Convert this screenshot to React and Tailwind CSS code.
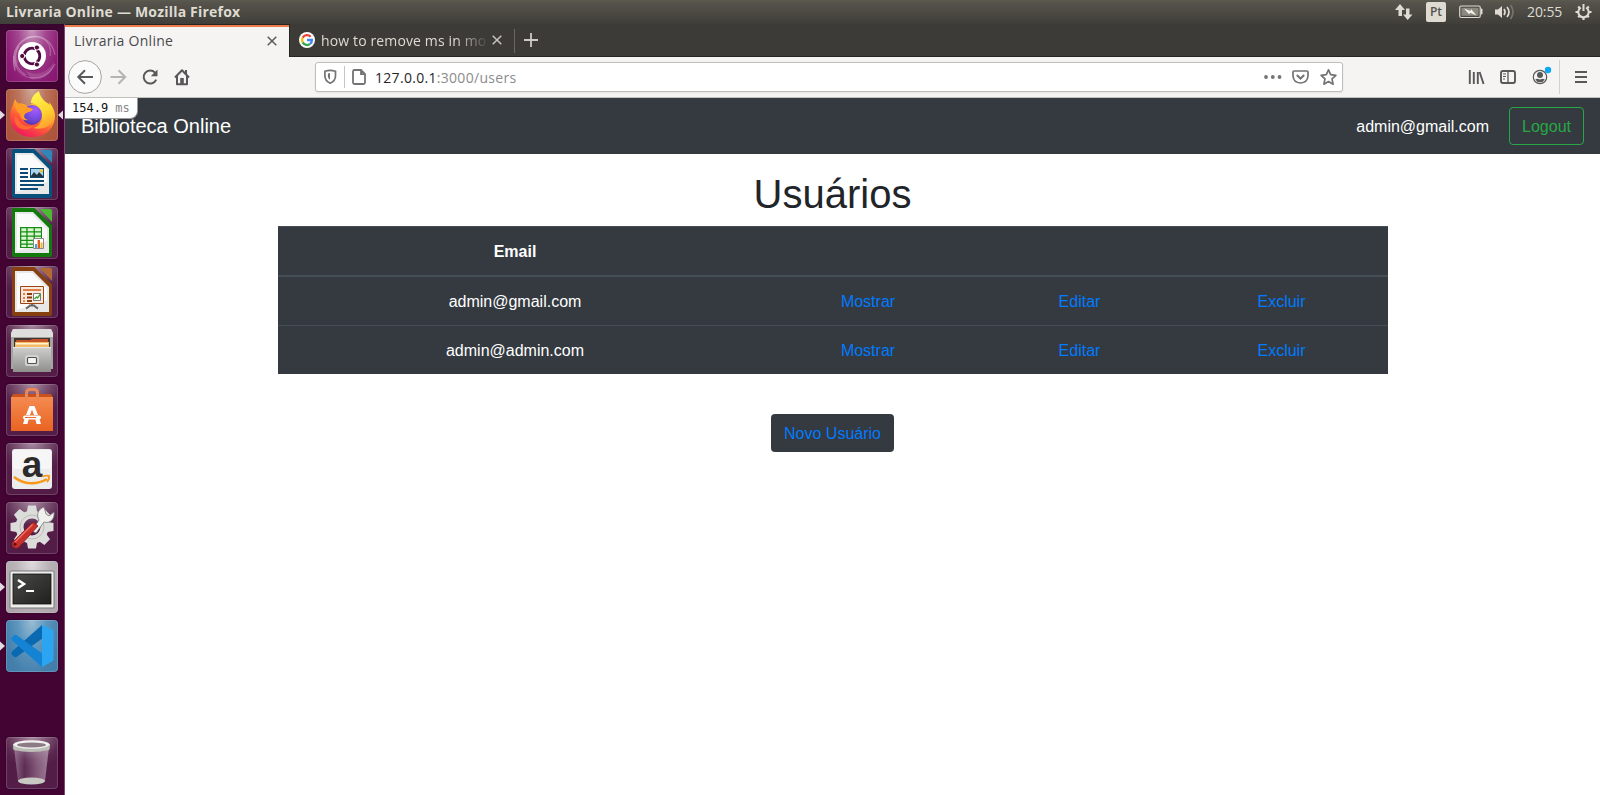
import React from "react";

function Tile({ tone, children, left, right }) {
  return (
    <div className="relative flex h-[52px] w-full shrink-0 pl-[6px]">
      {left && (
        <svg className="absolute left-0 top-[21px]" width="5" height="10" viewBox="0 0 5 10">
          <path d="M0 0.5 5 5 0 9.5z" fill="#e0dcdf" />
        </svg>
      )}
      <div className={"h-[52px] w-[52px] overflow-hidden rounded-[4px] shadow-[inset_0_0_0_1px_rgba(255,255,255,0.16),0_0_2px_rgba(0,0,0,0.45)] " + tone}>
        <svg width="52" height="52" viewBox="0 0 52 52">{children}</svg>
      </div>
      {right && (
        <svg className="absolute right-[1px] top-[21px]" width="5" height="10" viewBox="0 0 5 10">
          <path d="M5 0.5 0 5 5 9.5z" fill="#e0dcdf" />
        </svg>
      )}
    </div>
  );
}

const glass = "bg-[radial-gradient(ellipse_38px_30px_at_50%_0%,#a98aa2_0%,#7d5473_40%,#5b2850_75%,#531d48_100%)]";

function Dash() {
  return (
    <Tile tone="bg-[radial-gradient(ellipse_at_50%_0%,#c795bd_0%,#a4468f_38%,#8d1d76_75%,#87156e_100%)]">
      <g fill="none" stroke="#fff" strokeOpacity=".25" strokeWidth="1.2">
        <path d="M9 41C3 20 16 5 31 7c9 1 15 8 13 19" />
        <path d="M20 8C35 2 47 12 49 25" />
        <path d="M8 26c0 15 11 25 26 21 8-2 12-7 15-13" />
        <path d="M13 16C5 28 11 40 20 45" />
      </g>
      <path d="M9 41C2 18 17 4 31 7 17 8 8 19 12 32z" fill="#fff" opacity=".14" />
      <path d="M19 40c10 8 24 2 29-9 0 12-10 20-23 18z" fill="#fff" opacity=".14" />
      <circle cx="26" cy="27" r="14" fill="#4d073d" opacity=".35" />
      <circle cx="26" cy="26" r="14" fill="#fff" />
      <circle cx="26" cy="26" r="7.8" fill="none" stroke="#510b42" strokeWidth="2.800" strokeDasharray="14.5 1.840" strokeDashoffset="-9.100" />
      <g fill="#510b42" stroke="#fff" strokeWidth="1">
        <circle cx="16.2" cy="26" r="2.6" />
        <circle cx="30.9" cy="17.5" r="2.6" />
        <circle cx="30.9" cy="34.5" r="2.6" />
      </g>
    </Tile>
  );
}

function Firefox() {
  return (
    <Tile left right tone="bg-[radial-gradient(ellipse_at_50%_0%,#d0a899_0%,#bb745b_38%,#ae583e_75%,#aa5239_100%)]">
      <defs>
        <linearGradient id="fxBody" x1=".85" y1="0" x2=".25" y2="1">
          <stop offset="0" stopColor="#ffe62e" />
          <stop offset=".35" stopColor="#ffac2a" />
          <stop offset=".62" stopColor="#ff5b36" />
          <stop offset="1" stopColor="#ee1261" />
        </linearGradient>
        <radialGradient id="fxGlobe" cx=".65" cy=".25" r=".85">
          <stop offset="0" stopColor="#a65bff" />
          <stop offset=".6" stopColor="#7048d8" />
          <stop offset="1" stopColor="#4c3299" />
        </radialGradient>
        <linearGradient id="fxFlame" x1=".4" y1="0" x2=".7" y2="1">
          <stop offset="0" stopColor="#fff44f" />
          <stop offset=".55" stopColor="#ffd52f" />
          <stop offset="1" stopColor="#ff9830" />
        </linearGradient>
      </defs>
      <path d="M9 10c1 2 2 4 4 5 3-1 6 0 8 2l12-5c7 0 15 4 16 14 0 13-9 22-23 22C13 48 4 39 4 28c0-7 3-11 5-18z" fill="url(#fxBody)" />
      <path d="M33 2c-5 3-8 7-8 12 7 1 11 6 11 14 0 6-4 10-9 11 12 3 21-3 21-14 0-5-2-9-5-12l1 4C39 12 34 9 33 2z" fill="url(#fxFlame)" />
      <circle cx="26" cy="26" r="10" fill="url(#fxGlobe)" />
      <path d="M9 13c2 1 8 2 12 5 2 1 5 1 6 2-1 3-6 3-8 5-2 3 0 5 3 6-5 1-8-2-8-6-3-2-5-5-5-12z" fill="#ff9b27" />
      <path d="M12 30c3 7 10 9 16 6-3 5-11 6-16 2-3-3-4-7-3-11z" fill="#ff6a32" />
    </Tile>
  );
}

function Doc({ dark, corner, children }) {
  return (
    <Tile tone={glass}>
      <path d="M8 1h20.500L46 18.500V48q0 2-2 2H8q-2 0-2-2V3q0-2 2-2z" fill={dark} />
      <path d="M34 2h10q2 0 2 2v11z" fill={corner} />
      <path d="M9 5h18l16 16v25H9z" fill="#e8e8e8" />
      <path d="M11 7h15l15 15v12L11 44z" fill="#fff" opacity=".8" />
      {children}
    </Tile>
  );
}

function Writer() {
  return (
    <Doc dark="#07517c" corner="#2e86bb">
      <g fill="#0c4a73">
        <path d="M14 20h8v2h-8zM14 24h8v2h-8zM14 28h8v2h-8zM14 32h24v2H14zM14 36h24v2H14zM14 40h18v2H14z" />
        <path d="M24 20h14v10H24z" />
      </g>
      <path d="M25 21h12v8H25z" fill="#a9d4ec" />
      <path d="M25 28l3-4 3 3 2-3 4 4v1H25z" fill="#22343b" />
      <circle cx="35.5" cy="22.8" r="1.8" fill="#f4c534" />
    </Doc>
  );
}

function Calc() {
  return (
    <Doc dark="#127a0b" corner="#4dba34">
      <path d="M14 20h22v21H14z" fill="#178c13" />
      <g fill="#d9f7d0">
        <path d="M15.3 21.3h5v3h-5zM21.6 21.3h6v3h-6zM28.9 21.3h6v3h-6z" />
        <path d="M15.3 25.5h5v3h-5zM21.6 25.5h6v3h-6zM28.9 25.5h6v3h-6z" />
        <path d="M15.3 29.7h5v3h-5zM21.6 29.7h6v3h-6zM28.9 29.7h6v3h-6z" />
        <path d="M15.3 33.9h5v2.6h-5zM21.6 33.9h6v2.6h-6zM15.3 37.7h5v2.4h-5zM21.6 37.7h6v2.4h-6z" />
      </g>
      <path d="M27.5 31.5h10v10h-10z" fill="#fff" stroke="#888" />
      <path d="M29 37h2v4h-2z" fill="#3ea5d8" />
      <path d="M31.6 33h2.4v8h-2.4z" fill="#e35a25" />
      <path d="M34.6 35.5h2v5.5h-2z" fill="#efb82c" />
    </Doc>
  );
}

function Impress() {
  return (
    <Doc dark="#87400f" corner="#b56a35">
      <path d="M14.5 20.5h23v17h-23z" fill="#f9e8dc" stroke="#9c4514" />
      <path d="M17 23h18v2H17z" fill="#e07f4a" />
      <path d="M17 27h2v2h-2zM17 31h2v2h-2zM17 34.3h2V36h-2z" fill="#e07f4a" />
      <path d="M21 27h5v2h-5zM21 30.6h5v2h-5zM21 34h5v2h-5z" fill="#8b3e12" />
      <path d="M27.5 27.5h7v7h-7z" fill="#fff" stroke="#777" />
      <path d="M28.5 33l2-2 1 1 3-4" fill="none" stroke="#3aa331" strokeWidth="1.3" />
      <path d="M26 38v2M20 42.5c2-1 3-2 4-3h4c1 1 2 2 4 3" fill="none" stroke="#666" strokeWidth="2" />
    </Doc>
  );
}

function Files() {
  return (
    <Tile tone={glass}>
      <defs>
        <linearGradient id="cab" x1="0" y1="0" x2="0" y2="1">
          <stop offset="0" stopColor="#cfcfcd" />
          <stop offset="1" stopColor="#8e8e8c" />
        </linearGradient>
      </defs>
      <path d="M7 4h38l2 5v35H5V9z" fill="#a4a4a2" />
      <path d="M7 4h38l2 4v4H5V8z" fill="#dededc" />
      <path d="M8 13h36v9H8z" fill="#403630" />
      <path d="M10 15h14l2-1h16v3H10z" fill="#c45228" />
      <path d="M9 17h34v5H9z" fill="#f4bb69" />
      <path d="M10 18h32v1.5H10z" fill="#fff2cd" />
      <path d="M7 22h38v25H7z" fill="url(#cab)" />
      <path d="M7 22.5h38" stroke="#e8e8e6" />
      <rect x="19" y="30" width="14" height="11" rx="2.5" fill="#d2d2d0" />
      <rect x="21.5" y="32.5" width="9" height="6" rx="1" fill="#f4f4f4" stroke="#555" strokeWidth="1.2" />
    </Tile>
  );
}

function Software() {
  return (
    <Tile tone={glass}>
      <defs>
        <linearGradient id="bag" x1="0" y1="0" x2="0" y2="1">
          <stop offset="0" stopColor="#f58b50" />
          <stop offset="1" stopColor="#e96322" />
        </linearGradient>
      </defs>
      <path d="M7 10h38l2 4H5z" fill="#c9511c" />
      <path d="M5 13h42v34H5z" fill="url(#bag)" />
      <path d="M20.5 17V9q0-3.500 3.500-3.500h4q3.500 0 3.500 3.500V17" fill="none" stroke="#e9875b" strokeWidth="3" />
      <path d="M23.500 22h5l3.500 9h-4L26 25.500 24 31h-4zM18.500 35h4.200l-1.200 5h-4.500zM29.300 35h4.200l1.500 5h-4.500z" fill="#fff" />
      <rect x="17" y="31.500" width="18" height="4" rx="2" fill="#fff" />
      <path d="M19 33.500h11" stroke="#ed6d2d" strokeWidth="1" />
    </Tile>
  );
}

function Amazon() {
  return (
    <Tile tone={glass}>
      <rect x="6" y="6" width="40" height="40" rx="3" fill="#ececec" />
      <rect x="7" y="7" width="38" height="19" rx="2" fill="#f6f6f6" />
      <text x="26" y="34" textAnchor="middle" fontFamily="Liberation Sans, sans-serif" fontWeight="700" fontSize="37" fill="#2b2b2b">a</text>
      <path d="M8 34c10 8 23 8 33 2" fill="none" stroke="#f79a1c" strokeWidth="2.400" />
      <path d="M36.500 33.800q3-1.800 6.500-.8.500 3.500-2 6" fill="none" stroke="#f79a1c" strokeWidth="1.900" />
    </Tile>
  );
}

function Settings() {
  const teeth = [0, 45, 90, 135, 180, 225, 270, 315];
  return (
    <Tile tone={glass}>
      <g fill="#dcdcdb">
        {teeth.map((a) => (
          <path key={a} d="M20.500 12 22 3.500h8l1.500 8.500z" transform={`rotate(${a} 26 25)`} />
        ))}
      </g>
      <circle cx="26" cy="25" r="12.500" fill="none" stroke="#dcdcdb" strokeWidth="8" />
      <circle cx="26" cy="25" r="12" fill="none" stroke="#bcbcbb" />
      <path d="M26 29 33 18c-3-5-1-11 5-13l2 7 3 2 5-4c1 7-4 12-10 10l-8 11z" fill="#f0f0ef" stroke="#777" strokeWidth=".8" />
      <path d="M27 20l5 4-19 21c-3 3-8 0-7-4z" fill="#c9302c" stroke="#8c1c1a" strokeWidth=".8" />
      <path d="M26.500 22.500 9 40" stroke="#ee7069" strokeWidth="1.500" />
      <circle cx="9" cy="42.300" r="1.500" fill="#5b1110" />
    </Tile>
  );
}

function Terminal() {
  return (
    <Tile left tone="bg-[radial-gradient(ellipse_at_50%_0%,#dedbdd_0%,#bab3b8_45%,#aaa2a8_100%)]">
      <defs>
        <linearGradient id="term" x1="0" y1="0" x2="1" y2="1">
          <stop offset="0" stopColor="#4a4a49" />
          <stop offset="1" stopColor="#20201f" />
        </linearGradient>
      </defs>
      <rect x="4" y="10" width="44" height="37" rx="1" fill="#eeeeec" stroke="#777" />
      <rect x="7" y="13" width="38" height="30" fill="url(#term)" stroke="#111" strokeWidth=".8" />
      <path d="M12 19l6 4-6 4" fill="none" stroke="#fff" strokeWidth="2.500" />
      <path d="M20 30h8" stroke="#fff" strokeWidth="2" />
    </Tile>
  );
}

function Code() {
  return (
    <Tile left tone="bg-[radial-gradient(ellipse_at_50%_0%,#9cbdd4_0%,#5e98bf_38%,#457fac_75%,#417ba9_100%)]">
      <path d="M36 5 6 31.500q-1.500 2 0 3.500l2 1.800q2 1 3.500-.5L37 18z" fill="#0a69b0" />
      <path d="M36 47 6 20.500q-1.500-2 0-3.500l2-1.800q2-1 3.500.5L37 34z" fill="#1583d4" />
      <path d="M36 5l10 4.500q1.500.8 1.500 2.500v27q0 1.700-1.500 2.500L36 47z" fill="#2ba5f2" />
    </Tile>
  );
}

function Trash() {
  return (
    <Tile tone={glass}>
      <defs>
        <linearGradient id="can" x1="0" y1="0" x2="1" y2="0">
          <stop offset="0" stopColor="#d8c9d5" stopOpacity=".45" />
          <stop offset=".3" stopColor="#b9a3b5" stopOpacity=".12" />
          <stop offset=".65" stopColor="#d8c9d5" stopOpacity=".35" />
          <stop offset="1" stopColor="#e8dde6" stopOpacity=".5" />
        </linearGradient>
      </defs>
      <path d="M8 10h35l-4 34q-13 5-27 0z" fill="url(#can)" />
      <ellipse cx="25.500" cy="44" rx="13.500" ry="3.500" fill="#c9c9c4" />
      <path d="M7 7q0 6 1 6 17 4 35 0 1-1 1-6z" fill="#bdbdb8" />
      <ellipse cx="25.500" cy="7.500" rx="18" ry="4.200" fill="#f1f1ee" />
      <ellipse cx="25.500" cy="8" rx="14.500" ry="2.400" fill="#8c7b87" />
    </Tile>
  );
}

function TopPanel() {
  return (
    <header className="flex h-6 shrink-0 items-center bg-[linear-gradient(#5c5b4e_0,#56544c_2px,#3f3e39_100%)] pl-[6px] font-['Open_Sans','Noto_Sans',sans-serif] text-[#dfdbd2]">
      <div className="flex-1 text-[14px] font-bold leading-6 tracking-[0.2px]">Livraria Online — Mozilla Firefox</div>
      <svg className="mr-[13px]" width="18" height="18" viewBox="0 0 18 18" fill="#dfdbd2">
        <path d="M0 7 5 1l5 6H7v6H3.500V7zM8 11.500h3V5.500h3.500v6h3L12.700 17z" />
      </svg>
      <div className="mr-[13px] flex h-5 w-5 items-center justify-center rounded-[2px] bg-[#dfdbd2] text-[12px] font-semibold text-[#55534e]">Pt</div>
      <svg className="mr-[12px]" width="24" height="14" viewBox="0 0 24 14">
        <rect x=".75" y="1" width="20.500" height="11.500" rx="1.500" fill="none" stroke="#dfdbd2" strokeWidth="1.200" />
        <path d="M2.500 2.800h17v8h-17z" fill="#8b8880" />
        <path d="M22 3.500h.5q1 0 1 1v4q0 1-1 1H22z" fill="#dfdbd2" />
        <path d="M5 3.500l6.500 2.500.5-2 5.500 6.500-6.500-2.700-.8 1.700z" fill="#f3f0e8" />
      </svg>
      <svg className="mr-[12px]" width="20" height="16" viewBox="0 0 20 16" fill="none" stroke="#dfdbd2" strokeWidth="1.700">
        <path d="M0 5.500h3L7 2v12l-4-3.500H0z" fill="#dfdbd2" stroke="none" />
        <path d="M9 5q2 3 0 6M12 3q4 5 0 10" />
        <path d="M15.500 1q5 7 0 14" stroke="#77746d" />
      </svg>
      <span className="mr-[12px] w-[36px] whitespace-nowrap pb-[2px] text-[14px] tracking-[-0.1px]">20:55</span>
      <svg className="mr-[8px]" width="17" height="18" viewBox="0 0 17 18" fill="none" stroke="#dfdbd2">
        <path d="M5.800 4.700a5.200 5.200 0 1 0 5.400 0" strokeWidth="2" />
        <path d="M8.500 1v7" strokeWidth="2" />
        <path d="M8.500 14v3M.5 9h3M13.500 9h3M3.200 3.500l1.500 1.500M13.800 3.500l-1.500 1.500M3.200 14.300l1.500-1.500M13.800 14.300l-1.500-1.500" strokeWidth="2.200" />
      </svg>
    </header>
  );
}

function Google() {
  return (
    <svg className="shrink-0" width="16" height="16" viewBox="0 0 16 16">
      <circle cx="8" cy="8" r="8" fill="#fff" />
      <g fill="none" strokeWidth="2.300">
        <path d="M11.600 4.700A4.900 4.900 0 0 0 3.700 5.600" stroke="#ea4335" />
        <path d="M3.700 5.600a5 5 0 0 0 0 4.800" stroke="#fbbc05" />
        <path d="M3.700 10.400a4.900 4.900 0 0 0 7.400 1.500" stroke="#34a853" />
        <path d="M11.100 11.900A4.900 4.900 0 0 0 12.900 8H8" stroke="#4285f4" />
      </g>
    </svg>
  );
}

function Close({ color }) {
  return (
    <svg width="10" height="10" viewBox="0 0 10 10">
      <path d="M.7.700l8.600 8.600M9.300.7.700 9.300" stroke={color} strokeWidth="1.500" />
    </svg>
  );
}

function Tabs() {
  return (
    <div className="flex h-[33px] border-b border-[#262522] bg-[#3c3b37] font-['Open_Sans','Noto_Sans',sans-serif] text-[14px]">
      <div className="-mb-px flex w-[224px] items-center justify-between border-t border-[#262522] bg-[#f5f4f2] pl-[9px] pr-[12px] text-[#4a4a4f] shadow-[inset_0_2px_0_#ee7b4b]">
        <span className="pb-[2px] tracking-[0.28px]">Livraria Online</span>
        <Close color="#5a5a5a" />
      </div>
      <div className="flex w-[225px] items-center border-l border-[#262522] pl-[9px] text-[#dfdbd2]">
        <Google />
        <div className="ml-[6px] w-[166px] shrink-0 overflow-hidden whitespace-nowrap tracking-[0.13px] [mask-image:linear-gradient(90deg,#000_135px,transparent_168px)]">how to remove ms in mo</div>
        <div className="ml-[5px]"><Close color="#c7c3bb" /></div>
      </div>
      <div className="mt-[5px] h-6 w-px bg-[#6a6861]" />
      <svg className="ml-[9px] mt-[9px]" width="14" height="14" viewBox="0 0 14 14">
        <path d="M7 0v14M0 7h14" stroke="#cfcbc3" strokeWidth="1.800" />
      </svg>
    </div>
  );
}

function Toolbar() {
  return (
    <div className="flex h-[41px] items-center border-b border-[#c2c0bd] bg-[#f5f4f2] pl-[3px]">
      <svg width="130" height="36" viewBox="0 0 130 36" fill="none" stroke="#58585a" strokeWidth="2">
        <circle cx="17" cy="18" r="16.400" fill="#fbfbfb" stroke="#a5a4a2" strokeWidth="1" />
        <path d="M25 18H10.500M17 11.300 10.300 18 17 24.700" />
        <path d="M42.500 18H57M50.500 11.300l6.700 6.700-6.700 6.700" stroke="#b5b4b3" />
        <path d="M87 13.600a6.500 6.500 0 1 0 1.200 7" />
        <path d="M89.500 10.500v6.800h-6.700z" fill="#58585a" stroke="none" />
        <path d="M107 18.500 114 11.300l7 7.200M109 17v8.200h10V17" strokeLinejoin="round" />
        <path d="M112.200 25v-6h3.600v6z" fill="#58585a" stroke="none" />
        <path d="M117 11h2v4h-2z" fill="#58585a" stroke="none" />
      </svg>
      <div className="ml-[117px] flex h-[30px] w-[1028px] items-center rounded-[3px] border border-[#bfbdba] bg-white pl-[8px] shadow-[0_1px_2px_rgba(0,0,0,0.08)]">
        <svg width="44" height="22" viewBox="0 0 44 22" fill="none" stroke="#737373" strokeWidth="1.700">
          <path d="M6.200 4.300q2.500 0 5.300 1v4.500c0 4-2 6-5.300 7.400C2.900 15.800.9 13.800.9 9.800V5.300q2.800-1 5.300-1z" />
          <path d="M6 7 3.900 7.500v2.300c0 2 .8 3.200 2.100 4z" fill="#737373" stroke="none" />
          <path d="M20.500 0v22" stroke="#c6c5c3" strokeWidth="1" />
          <path d="M37 4h-6.500q-1.500 0-1.500 1.500v11q0 1.500 1.500 1.500h9q1.500 0 1.500-1.500V8.200zV8.200h4.200" strokeWidth="1.800" />
        </svg>
        <span className="ml-[7px] flex-1 font-['Open_Sans','Noto_Sans',sans-serif] text-[14px] tracking-[0.3px] text-[#8b8b8b]"><span className="text-[#262626]">127.0.0.1</span>:3000/users</span>
        <svg className="mr-[5.500px]" width="74" height="18" viewBox="0 0 74 18" fill="none" stroke="#737373" strokeWidth="1.700">
          <g fill="#737373" stroke="none">
            <circle cx="3" cy="9" r="1.900" /><circle cx="9.800" cy="9" r="1.900" /><circle cx="16.500" cy="9" r="1.900" />
          </g>
          <path d="M31 3h13q1 0 1 1v4q-.5 6.500-7.500 7-7-.5-7.500-7V4q0-1 1-1z" />
          <path d="M33.800 7l3.700 3.500L41.200 7" strokeWidth="2" />
          <path d="M65.500 1.800l2.200 4.900 5.200.6-3.900 3.600 1.100 5.300-4.600-2.600-4.600 2.600 1.100-5.300-3.900-3.600 5.200-.6z" strokeLinejoin="round" />
        </svg>
      </div>
      <div className="flex-1" />
      <svg className="mr-[12px]" width="121" height="34" viewBox="0 0 121 34" fill="none" stroke="#58585a" strokeWidth="2">
        <path d="M2.800 10v14M6.800 12v12M10.800 12v12M12.600 12l4 12" strokeWidth="1.900" />
        <rect x="34" y="11" width="14" height="12" rx="2" strokeWidth="1.900" />
        <path d="M41 11v12" strokeWidth="1.300" />
        <path d="M36 14h3M36 16.500h3M36 19h2" strokeWidth="1.100" />
        <circle cx="73" cy="17" r="6.700" strokeWidth="1.200" />
        <circle cx="73" cy="15" r="3" fill="#58585a" stroke="none" />
        <path d="M68.300 19.500q1.500-1 3-.5 1.700.8 3.400 0 1.500-.5 3 .5-1.500 2.800-4.700 2.800t-4.700-2.800z" fill="#58585a" stroke="none" />
        <circle cx="81" cy="10" r="3.200" fill="#0aa8f5" stroke="none" />
        <path d="M92.500 0v34" stroke="#d3d1ce" strokeWidth="1" />
        <path d="M108 12h12M108 17h12M108 22h12" />
      </svg>
    </div>
  );
}

function Row({ email, height }) {
  return (
    <tr className={"border-t border-[#454d55] " + height}>
      <td className="pt-[3px]">{email}</td>
      <td className="pt-[3px] text-[#007bff]">Mostrar</td>
      <td className="pt-[3px] text-[#007bff]">Editar</td>
      <td className="pt-[3px] text-[#007bff]">Excluir</td>
    </tr>
  );
}

function Page() {
  return (
    <div className="relative flex-1 bg-white font-['Liberation_Sans',Arial,sans-serif] text-[16px] leading-6 text-[#212529]">
      <div className="absolute left-0 top-0 z-10 h-[20.500px] w-[73px] rounded-br-[8px] border-b border-r border-[#999] bg-white pl-[7px] font-['DejaVu_Sans_Mono',monospace] text-[12px] leading-[20px] text-[#111]">
        154.9 <span className="text-[#888]">ms</span>
      </div>
      <nav className="flex h-14 items-center bg-[#343a40] px-4 text-white">
        <span className="text-[20px] leading-[30px]">Biblioteca Online</span>
        <span className="ml-auto pt-[2px]">admin@gmail.com</span>
        <button className="ml-5 h-[38px] w-[75px] rounded-[4px] border border-[#28a745] pt-[2px] text-[#28a745]">Logout</button>
      </nav>
      <main className="mx-auto w-[1110px] pt-4 text-center">
        <h1 className="mb-2 text-[40px] font-normal leading-[48px]">Usuários</h1>
        <table className="w-full table-fixed border-collapse bg-[#343a40] text-white">
          <colgroup>
            <col className="w-[475px]" />
            <col className="w-[231px]" />
            <col className="w-[192px]" />
            <col className="w-[212px]" />
          </colgroup>
          <thead>
            <tr className="h-[49px] border-b-2 border-t border-b-[#454d55] border-t-[#454d55]">
              <th className="pt-[3px] font-bold">Email</th>
              <th /><th /><th />
            </tr>
          </thead>
          <tbody>
            <Row email="admin@gmail.com" height="h-[50px]" />
            <Row email="admin@admin.com" height="h-[48px]" />
          </tbody>
        </table>
        <button className="mt-10 h-[38px] w-[123px] rounded-[4px] bg-[#343a40] pt-[2px] text-[#007bff]">Novo Usuário</button>
      </main>
    </div>
  );
}

export default function App() {
  return (
    <div className="flex h-[795px] w-[1600px] flex-col overflow-hidden">
      <TopPanel />
      <div className="flex min-h-0 flex-1">
        <aside className="flex w-[65px] shrink-0 flex-col gap-[7px] border-r border-[#7e4776] bg-[linear-gradient(#390630_0,#430434_14px,#430434_100%)] pb-[6px] pt-[6px]">
          <Dash />
          <Firefox />
          <Writer />
          <Calc />
          <Impress />
          <Files />
          <Software />
          <Amazon />
          <Settings />
          <Terminal />
          <Code />
          <div className="flex-1" />
          <Trash />
        </aside>
        <div className="flex flex-1 flex-col">
          <Tabs />
          <Toolbar />
          <Page />
        </div>
      </div>
    </div>
  );
}
